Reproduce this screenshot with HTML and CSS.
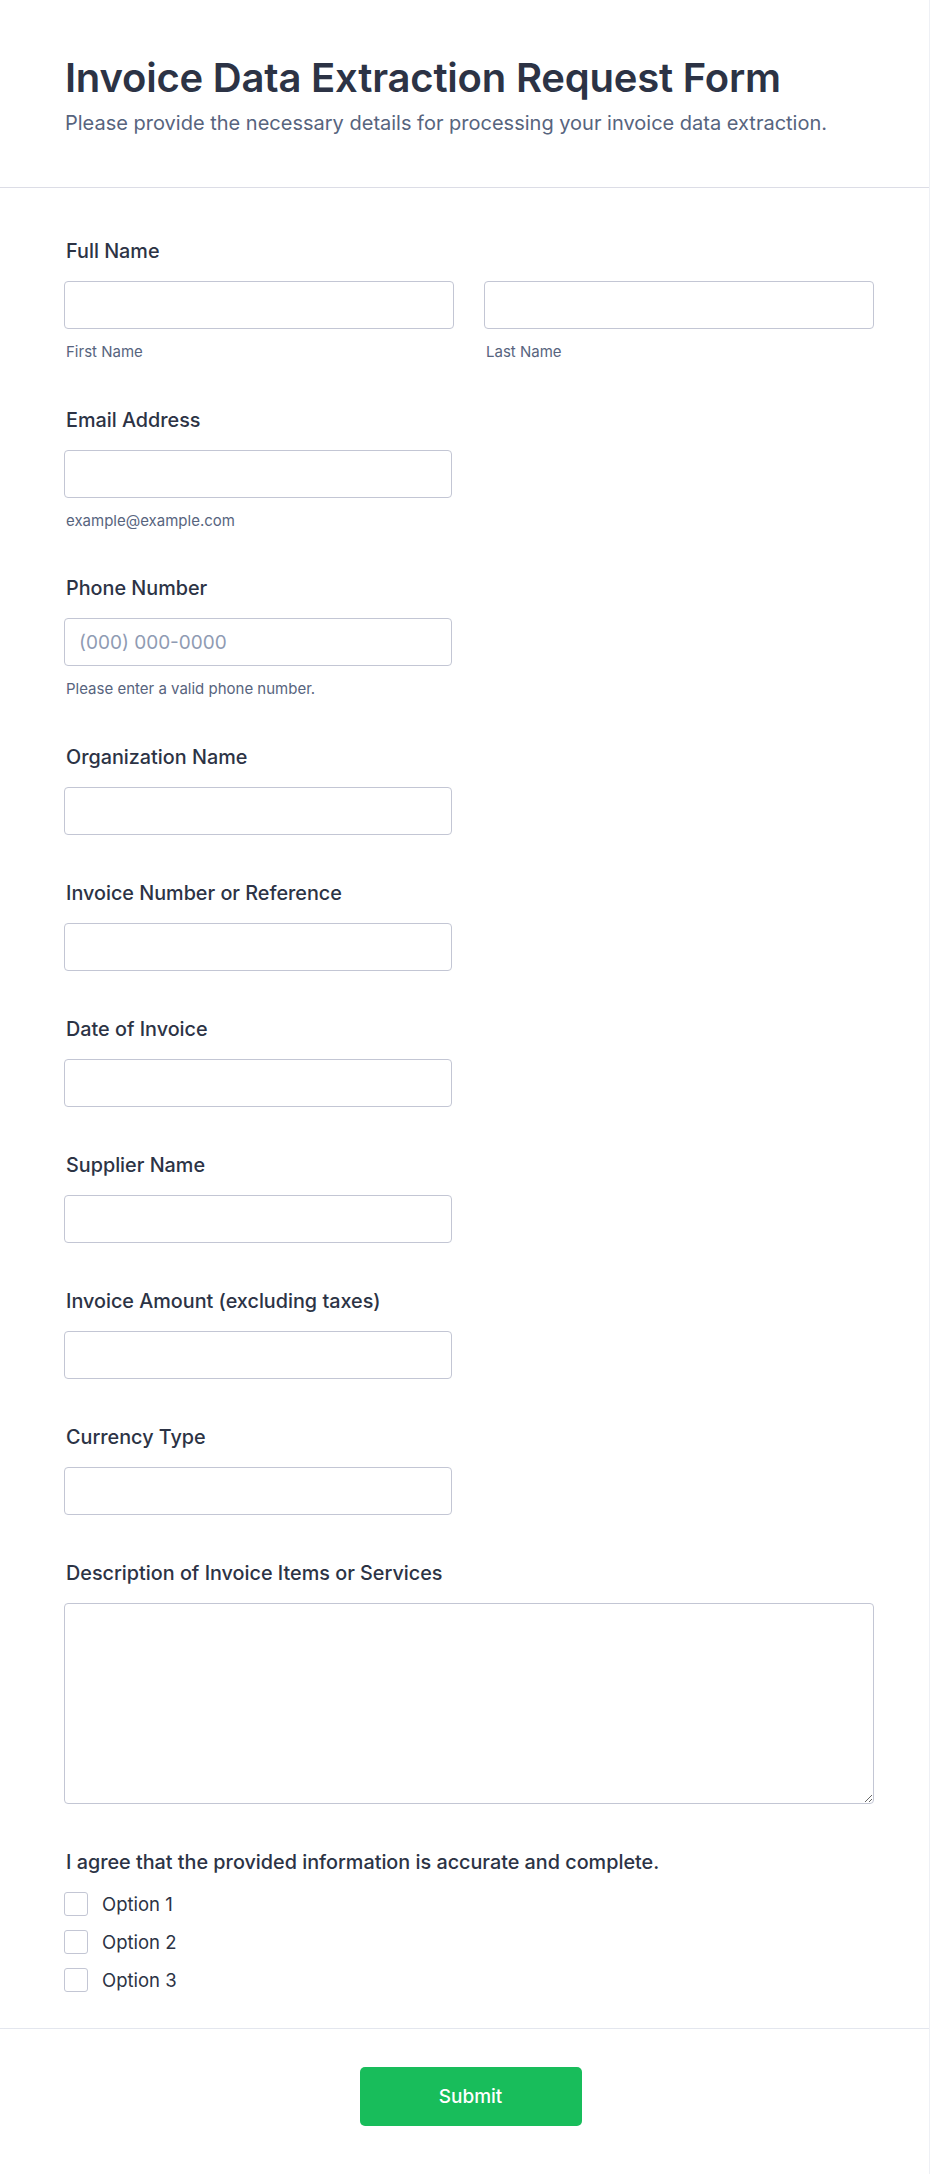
FILE: index.html
```html
<!DOCTYPE html>
<html lang="en">
<head>
<meta charset="utf-8">
<title>Invoice Data Extraction Request Form</title>
<link rel="stylesheet" href="styles.css">
</head>
<body>
<div class="page">
  <header class="form-header">
    <h1 class="form-title">Invoice Data Extraction Request Form</h1>
    <p class="form-subtitle">Please provide the necessary details for processing your invoice data extraction.</p>
  </header>

  <form class="form-body">
    <div class="field">
      <label class="field-label">Full Name</label>
      <div class="name-row">
        <div class="name-col">
          <input class="text-input" type="text">
          <span class="sub-label">First Name</span>
        </div>
        <div class="name-col">
          <input class="text-input" type="text">
          <span class="sub-label">Last Name</span>
        </div>
      </div>
    </div>

    <div class="field">
      <label class="field-label">Email Address</label>
      <input class="text-input half" type="email">
      <span class="sub-label">example@example.com</span>
    </div>

    <div class="field">
      <label class="field-label">Phone Number</label>
      <input class="text-input half" type="tel" placeholder="(000) 000-0000">
      <span class="sub-label">Please enter a valid phone number.</span>
    </div>

    <div class="field">
      <label class="field-label">Organization Name</label>
      <input class="text-input half" type="text">
    </div>

    <div class="field">
      <label class="field-label">Invoice Number or Reference</label>
      <input class="text-input half" type="text">
    </div>

    <div class="field">
      <label class="field-label">Date of Invoice</label>
      <input class="text-input half" type="text">
    </div>

    <div class="field">
      <label class="field-label">Supplier Name</label>
      <input class="text-input half" type="text">
    </div>

    <div class="field">
      <label class="field-label">Invoice Amount (excluding taxes)</label>
      <input class="text-input half" type="text">
    </div>

    <div class="field">
      <label class="field-label">Currency Type</label>
      <input class="text-input half" type="text">
    </div>

    <div class="field">
      <label class="field-label">Description of Invoice Items or Services</label>
      <textarea class="text-area"></textarea>
    </div>

    <div class="field field-last">
      <label class="field-label">I agree that the provided information is accurate and complete.</label>
      <div class="options">
        <label class="option"><span class="box"></span><span class="option-text">Option 1</span></label>
        <label class="option"><span class="box"></span><span class="option-text">Option 2</span></label>
        <label class="option"><span class="box"></span><span class="option-text">Option 3</span></label>
      </div>
    </div>
  </form>

  <footer class="form-footer">
    <button class="submit-btn" type="button">Submit</button>
  </footer>
</div>
</body>
</html>
```

FILE: styles.css
```css
* {
  box-sizing: border-box;
}

html, body {
  margin: 0;
  padding: 0;
  background: #ffffff;
}

body {
  font-family: Inter, "Noto Sans", "Liberation Sans", sans-serif;
  color: #2c3345;
}

.page {
  width: 930px;
  min-height: 2174px;
  border-right: 1px solid #eef0f5;
}

.form-header {
  padding: 54px 64px 50px 65px;
  border-bottom: 1px solid #dcdde6;
}

.form-title {
  margin: 0;
  font-size: 40px;
  line-height: 48px;
  font-weight: 600;
  color: #2c3345;
  letter-spacing: -0.2px;
}

.form-subtitle {
  margin: 7px 0 0;
  font-size: 20px;
  line-height: 28px;
  font-weight: 400;
  color: #57647e;
}

.form-body {
  padding: 51px 56px 0 64px;
  display: flex;
  flex-direction: column;
}

.field {
  display: flex;
  flex-direction: column;
  align-items: flex-start;
  margin-bottom: 46px;
}

.field-last {
  margin-bottom: 36px;
}

.field-label {
  display: block;
  padding-left: 2px;
  font-size: 19.8px;
  line-height: 24px;
  font-weight: 500;
  color: #2c3345;
  margin-bottom: 18px;
}

.name-row {
  display: grid;
  grid-template-columns: 390px 390px;
  column-gap: 30px;
  width: 810px;
}

.name-col {
  display: flex;
  flex-direction: column;
}

.text-input {
  display: block;
  width: 100%;
  height: 48px;
  border: 1px solid #c3c6d4;
  border-radius: 4px;
  background: #ffffff;
  padding: 0 14px;
  font-family: Inter, "Noto Sans", sans-serif;
  font-size: 19px;
  color: #2c3345;
  outline: none;
}

.text-input.half {
  width: 388px;
}

.text-input::placeholder {
  color: #8f9bb3;
}

.sub-label {
  display: block;
  margin-top: 13px;
  padding-left: 2px;
  font-size: 15px;
  line-height: 19.6px;
  color: #57647e;
}

.text-area {
  display: block;
  width: 810px;
  height: 201px;
  border: 1px solid #c3c6d4;
  border-radius: 4px;
  background: #ffffff;
  padding: 10px 14px;
  font-family: Inter, "Noto Sans", sans-serif;
  font-size: 18px;
  resize: vertical;
  outline: none;
}

.options {
  display: flex;
  flex-direction: column;
  gap: 14px;
}

.option {
  display: flex;
  align-items: center;
  gap: 14px;
  height: 24px;
}

.box {
  width: 24px;
  height: 24px;
  border: 1px solid #c3c6d4;
  border-radius: 3px;
  background: #ffffff;
}

.option-text {
  font-size: 18.5px;
  line-height: 24px;
  color: #2c3345;
}

.form-footer {
  border-top: 1px solid #e3e6ee;
  padding: 38px 52px 50px 64px;
  display: flex;
  justify-content: center;
}

.submit-btn {
  width: 222px;
  height: 59px;
  border: none;
  border-radius: 5px;
  background: #18bd5b;
  color: #ffffff;
  font-family: Inter, "Noto Sans", sans-serif;
  font-size: 19px;
  font-weight: 500;
  cursor: pointer;
}
```
